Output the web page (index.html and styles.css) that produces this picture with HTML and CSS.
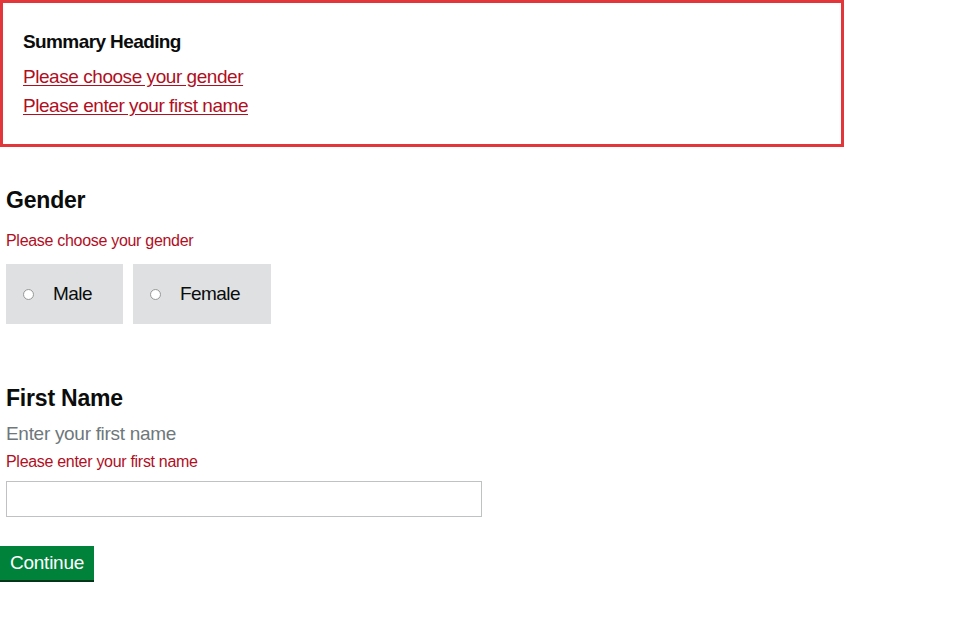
FILE: index.html
```html
<!DOCTYPE html>
<html lang="en">
<head>
<meta charset="utf-8">
<title>Form</title>
<link rel="stylesheet" href="styles.css">
</head>
<body>
<div class="error-summary">
  <h2 class="summary-heading">Summary Heading</h2>
  <ul class="summary-list">
    <li><a href="#gender">Please choose your gender</a></li>
    <li><a href="#first-name">Please enter your first name</a></li>
  </ul>
</div>

<div class="field gender-field">
  <h2 class="field-heading">Gender</h2>
  <p class="error-message">Please choose your gender</p>
  <div class="radios">
    <label class="radio-block"><input class="radio" type="radio" name="gender"><span>Male</span></label>
    <label class="radio-block"><input class="radio" type="radio" name="gender"><span>Female</span></label>
  </div>
</div>

<div class="field name-field">
  <h2 class="field-heading">First Name</h2>
  <p class="hint">Enter your first name</p>
  <p class="error-message error-name">Please enter your first name</p>
  <input class="text-input" type="text" id="first-name">
</div>

<button class="button" type="button">Continue</button>
</body>
</html>
```

FILE: styles.css
```css
html, body {
  margin: 0;
  padding: 0;
  background: #ffffff;
}
body {
  font-family: "Liberation Sans", Arial, sans-serif;
  color: #0b0c0c;
}
.error-summary {
  width: 844px;
  box-sizing: border-box;
  border: 3px solid #e3363a;
  padding: 26px 20px 24px;
}
.summary-heading {
  margin: 0 0 8px;
  font-size: 19px;
  line-height: 25px;
  font-weight: bold;
  letter-spacing: -0.6px;
}
.summary-list {
  list-style: none;
  margin: 0;
  padding: 0;
}
.summary-list li {
  font-size: 19px;
  line-height: 29px;
  letter-spacing: -0.45px;
}
.summary-list a {
  color: #b10e1e;
  text-decoration: underline;
  text-underline-offset: 2px;
}
.field {
  padding-left: 6px;
}
.gender-field {
  margin-top: 38px;
}
.field-heading {
  margin: 0;
  font-size: 23px;
  line-height: 30px;
  font-weight: bold;
  letter-spacing: -0.2px;
}
.error-message {
  margin: 16px 0 0;
  font-size: 16px;
  line-height: 20px;
  color: #b10e1e;
  letter-spacing: -0.3px;
}
.radios {
  display: flex;
  gap: 10px;
  margin-top: 13px;
}
.radio-block {
  display: flex;
  align-items: center;
  height: 60px;
  box-sizing: border-box;
  padding: 0 31px 0 17px;
  background: #dee0e2;
  font-size: 19px;
  letter-spacing: -0.55px;
}
.radio {
  appearance: none;
  -webkit-appearance: none;
  margin: 0 19px 0 0;
  width: 11px;
  height: 11px;
  border-radius: 50%;
  border: 1px solid #9b9b9b;
  background: radial-gradient(circle, #ffffff 55%, #ececec 100%);
  box-sizing: border-box;
  flex: none;
}
.name-field {
  margin-top: 59px;
}
.hint {
  margin: 8px 0 0;
  font-size: 19px;
  line-height: 25px;
  color: #6f777b;
  letter-spacing: -0.3px;
}
.error-name {
  margin-top: 6px;
}
.text-input {
  display: block;
  margin-top: 9px;
  width: 476px;
  height: 36px;
  box-sizing: border-box;
  border: 1px solid #bfc1c3;
  padding: 4px;
  font-size: 19px;
  font-family: inherit;
}
.button {
  display: block;
  margin-top: 29px;
  height: 36px;
  padding: 0 10px;
  border: 0;
  border-bottom: 2px solid #003618;
  background: #00823b;
  color: #ffffff;
  font-family: "Liberation Sans", Arial, sans-serif;
  font-size: 19px;
  line-height: 34px;
  letter-spacing: -0.25px;
}
```
